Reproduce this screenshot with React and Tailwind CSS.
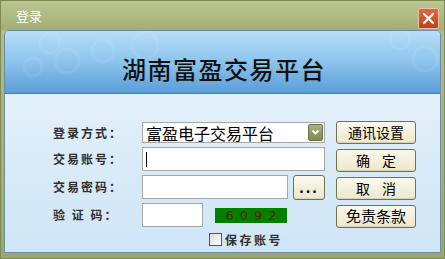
import React from "react";

const cjk = { fontFamily: '"Noto Sans CJK SC", "Noto Sans", sans-serif' };

function Btn({ children, className = "" }) {
  return (
    <div
      className={`flex items-center justify-center rounded-[3px] border border-[#6f7552] bg-gradient-to-b from-[#fbf9ec] to-[#ece7cc] text-[14px] text-black shadow-[inset_0_-1px_0_#d8d2b0] ${className}`}
    >
      {children}
    </div>
  );
}

function Label({ children }) {
  return (
    <div className="w-[70px] text-[12px] font-bold tracking-[2px] text-[#303030] whitespace-pre">
      {children}
    </div>
  );
}

export default function App() {
  return (
    <div
      className="w-[445px] h-[259px] flex flex-col bg-gradient-to-b from-[#b5bf8c] to-[#9aa86a] border border-[#7d8a52] overflow-hidden"
      style={cjk}
    >
      {/* title bar */}
      <div className="h-[29px] flex items-center justify-between pl-[15px] pr-[5px] bg-gradient-to-b from-[#bcc694] to-[#a3ae74]">
        <span className="text-[13px] text-white">登录</span>
        <div className="w-[21px] h-[21px] mt-[6px] rounded-[2px] border border-[#e9c2a8] bg-gradient-to-b from-[#e06a3e] to-[#b8421f] flex items-center justify-center">
          <svg width="13" height="13" viewBox="0 0 13 13">
            <path d="M2 2 L11 11 M11 2 L2 11" stroke="white" strokeWidth="2.4" strokeLinecap="round" />
          </svg>
        </div>
      </div>

      {/* body */}
      <div className="flex-1 flex flex-col mx-[3px] mb-[5px] rounded-t-[5px] overflow-hidden border border-[#6d8ca8]">
        <div className="relative h-[63px] flex items-center justify-center bg-gradient-to-b from-[#b8def7] via-[#8cc4ec] to-[#5a9dd8] border-b border-[#4a7eb0]">
          <svg className="absolute inset-0" width="437" height="63" viewBox="0 0 437 63">
            <g fill="none" stroke="white" strokeOpacity="0.08" strokeWidth="3">
              <circle cx="45" cy="12" r="10" />
              <circle cx="62" cy="30" r="12" />
              <circle cx="28" cy="36" r="9" />
              <circle cx="98" cy="20" r="11" />
              <circle cx="140" cy="14" r="13" />
              <circle cx="395" cy="8" r="10" />
              <circle cx="420" cy="28" r="12" />
            </g>
          </svg>
          <span className="relative text-[24px] font-medium tracking-[1.5px] text-[#111] mt-[13px] ml-[3px]">
            湖南富盈交易平台
          </span>
        </div>

        <div className="flex-1 flex bg-gradient-to-b from-[#e2f0fa] to-[#cfe5f6] pt-[28px] pl-[48px]">
          {/* form */}
          <div className="flex flex-col">
            <div className="flex items-center h-[21px]">
              <Label>登录方式：</Label>
              <div className="ml-[19px] w-[183px] h-[21px] flex items-center justify-between bg-white border border-[#a7a7a7] pl-[3px] pr-[1px]">
                <span className="text-[16px] text-black leading-none">富盈电子交易平台</span>
                <div className="w-[15px] h-[17px] rounded-[2px] bg-gradient-to-b from-[#a8b07f] to-[#7f8a55] border border-[#6b744a] flex items-center justify-center">
                  <svg width="9" height="7" viewBox="0 0 9 7">
                    <path d="M1.5 1.5 L4.5 4.5 L7.5 1.5" stroke="white" strokeWidth="1.8" fill="none" />
                  </svg>
                </div>
              </div>
            </div>
            <div className="flex items-center h-[24px] mt-[4px]">
              <Label>交易账号：</Label>
              <div className="ml-[19px] w-[183px] h-[24px] flex items-center bg-white border border-[#a7a7a7] pl-[3px]">
                <div className="w-[1px] h-[15px] bg-black" />
              </div>
            </div>
            <div className="flex items-center h-[24px] mt-[4px]">
              <Label>交易密码：</Label>
              <div className="ml-[19px] w-[146px] h-[24px] bg-white border border-[#a7a7a7]" />
              <Btn className="ml-[5px] w-[32px] h-[25px] font-bold tracking-[2px] text-[13px]">...</Btn>
            </div>
            <div className="flex items-center h-[24px] mt-[4px]">
              <Label>{"验 证 码："}</Label>
              <div className="ml-[19px] w-[61px] h-[24px] bg-white border border-[#a7a7a7]" />
              <div
                className="ml-[12px] w-[72px] h-[15px] bg-[#008000] flex items-center justify-center text-[13px] text-[#5a1c00] tracking-[6px] pl-[6px] leading-none"
                style={{ fontFamily: '"DejaVu Sans", sans-serif' }}
              >
                6092
              </div>
            </div>
            <div className="flex items-center h-[13px] mt-[6px] ml-[156px]">
              <div className="w-[13px] h-[13px] border border-[#555] bg-gradient-to-br from-[#dcdcdc] to-white" />
              <span className="ml-[3px] text-[12px] font-bold tracking-[2.5px] text-[#303030]">保存账号</span>
            </div>
          </div>

          {/* buttons */}
          <div className="flex flex-col gap-[5px] ml-[11px] -mt-[1px]">
            <Btn className="w-[80px] h-[23px]">通讯设置</Btn>
            <Btn className="w-[80px] h-[23px] tracking-[12px] pl-[12px]">确定</Btn>
            <Btn className="w-[80px] h-[23px] tracking-[12px] pl-[12px]">取消</Btn>
            <Btn className="w-[80px] h-[23px] text-[15px]">免责条款</Btn>
          </div>
        </div>
      </div>
    </div>
  );
}
